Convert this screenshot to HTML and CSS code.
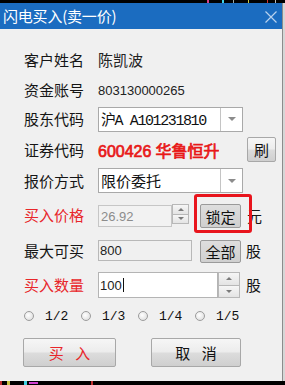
FILE: index.html
```html
<!DOCTYPE html>
<html lang="zh">
<head>
<meta charset="utf-8">
<link rel="stylesheet" href="styles.css">
</head>
<body>
<div class="screen">
  <div class="strip strip-top">
    <i class="bit b-red"></i><i class="bit b-cyan"></i><i class="bit b-white"></i><i class="bit b-yellow"></i><i class="bit b-red2"></i><i class="bit b-white2"></i>
  </div>
  <div class="mid">
    <div class="dlg">
      <div class="titlebar">
        <span class="title">闪电买入(卖一价)</span>
        <svg class="close" width="12" height="12" viewBox="0 0 12 12"><path d="M0.5 0.5 L11.5 11.5 M11.5 0.5 L0.5 11.5" stroke="#b9d2ee" stroke-width="1.2" fill="none"/></svg>
      </div>
      <div class="content">
        <div class="row h30"><span class="lbl">客户姓名</span><span class="val">陈凯波</span></div>
        <div class="row h30"><span class="lbl">资金账号</span><span class="num">803130000265</span></div>
        <div class="row h28"><span class="lbl">股东代码</span>
          <div class="select"><span class="sel-text mono">沪A A101231810</span><span class="drop"><i class="tri-down"></i></span></div>
        </div>
        <div class="row h33"><span class="lbl">证券代码</span><span class="stock"><span class="stock-code">600426</span><span class="stock-name">华鲁恒升</span></span><button class="btn btn-shua">刷</button></div>
        <div class="row h29"><span class="lbl">报价方式</span>
          <div class="select"><span class="sel-text">限价委托</span><span class="drop"><i class="tri-down"></i></span></div>
        </div>
        <div class="row h40"><span class="lbl red">买入价格</span>
          <div class="input input-price disabled"><span class="num grey">26.92</span></div>
          <div class="spin spin-price"><span class="sp-up"><i class="tri-up"></i></span><span class="sp-down"><i class="tri-dn"></i></span></div>
          <span class="mark"><button class="btn btn-flat">锁定</button></span>
          <span class="unit unit-yuan">元</span>
        </div>
        <div class="row h32"><span class="lbl">最大可买</span>
          <div class="input input-max"><span class="num">800</span></div>
          <button class="btn btn-flat btn-all">全部</button>
          <span class="unit">股</span>
        </div>
        <div class="row h36"><span class="lbl red">买入数量</span>
          <div class="input input-qty"><span class="num">100</span><i class="caret"></i></div>
          <div class="spin spin-qty"><span class="sp-up"><i class="tri-up"></i></span><span class="sp-down"><i class="tri-dn"></i></span></div>
          <span class="unit">股</span>
        </div>
        <div class="radios">
          <label class="radio"><i class="dot"></i><span class="mono small">1/2</span></label>
          <label class="radio"><i class="dot"></i><span class="mono small">1/3</span></label>
          <label class="radio"><i class="dot"></i><span class="mono small">1/4</span></label>
          <label class="radio"><i class="dot"></i><span class="mono small">1/5</span></label>
        </div>
        <div class="actions">
          <button class="btn btn-big btn-buy">买 入</button>
          <button class="btn btn-big btn-cancel">取 消</button>
        </div>
      </div>
    </div>
    <div class="edge"></div>
  </div>
  <div class="strip strip-bottom">
    <i class="bb bb-red"></i><i class="bb bb-yellow"></i><i class="bb bb-cyan"></i><i class="bb bb-mag"></i><i class="bb bb-red2"></i>
  </div>
</div>
</body>
</html>
```
FILE: styles.css
```css
* { box-sizing: border-box; }
html, body { margin: 0; padding: 0; }
body {
  width: 285px;
  height: 385px;
  overflow: hidden;
  background: #000;
  font-family: "Noto Sans CJK SC", "Liberation Sans", sans-serif;
  color: #111;
}
.screen { display: flex; flex-direction: column; width: 285px; height: 385px; }

.strip { background: #000; display: flex; flex: none; }
.strip-top { height: 3px; }
.bit { display: block; width: 1px; height: 3px; }
.b-red { margin-left: 207px; background: #d2408a; width: 2px; }
.b-cyan { margin-left: 13px; background: #3fd2e6; width: 2px; }
.b-white { margin-left: 9px; background: #9aa; }
.b-yellow { margin-left: 14px; background: #c8c840; }
.b-red2 { margin-left: 18px; background: #d03030; }
.b-white2 { margin-left: 7px; background: #bbb; }

.strip-bottom { height: 4px; }
.bb { display: block; height: 4px; }
.bb-red { width: 2px; background: #c03030; }
.bb-yellow { width: 3px; margin-left: 5px; background: #c8c040; }
.bb-cyan { width: 3px; margin-left: 14px; background: #40d0e0; }
.bb-mag { width: 9px; margin-left: 2px; height: 2px; margin-top: 1px; background: #d040d0; }
.bb-red2 { width: 2px; margin-left: 53px; background: #c03030; }

.mid { display: flex; flex: none; height: 378px; }
.dlg {
  width: 283px;
  border-right: 1px solid #8c8c8c;
  background: #f0f0f0;
  display: flex;
  flex-direction: column;
}
.edge { width: 2px; background: #d6d6d6; }

.titlebar {
  height: 26px;
  flex: none;
  background: #1b6cc0;
  display: flex;
  align-items: center;
  padding-left: 3px;
  padding-right: 4px;
}
.title { color: #fff; font-size: 15px; line-height: 26px; flex: 1; letter-spacing: -0.2px; }
.close { margin-top: 2px; margin-right: 1px; }

.content { padding: 16px 0 0 24px; display: flex; flex-direction: column; }
.row { display: flex; align-items: center; }
.h30 { height: 30px; }
.h28 { height: 28px; }
.h33 { height: 33px; }
.h29 { height: 29px; }
.h40 { height: 40px; }
.h32 { height: 32px; }
.h36 { height: 36px; }

.lbl { width: 74px; font-size: 15px; line-height: 20px; color: #151515; flex: none; }
.lbl.red { color: #e8262a; }
.val { font-size: 15px; line-height: 20px; color: #222; }
.num { font-family: "Liberation Sans", sans-serif; font-size: 13px; color: #222; }
.num.grey { color: #8c8c8c; }
.mono { font-family: "Liberation Mono", "Noto Sans CJK SC", monospace; }

.select {
  width: 145px;
  height: 25px;
  background: #fff;
  border: 1px solid #a9a9a9;
  display: flex;
  align-items: center;
}
.sel-text { flex: 1; padding-left: 2px; font-size: 15px; color: #111; white-space: nowrap; }
.sel-text.mono { font-size: 15px; letter-spacing: -1.4px; }
.drop {
  width: 22px;
  height: 100%;
  border-left: 1px solid #c4c4c4;
  display: flex;
  align-items: center;
  justify-content: center;
}
.tri-down {
  width: 0; height: 0;
  border-left: 4px solid transparent;
  border-right: 4px solid transparent;
  border-top: 4px solid #8c8c8c;
}

.stock {
  display: flex;
  align-items: baseline;
  width: 121px;
  overflow: hidden;
  color: #e81818;
  font-weight: normal;
  -webkit-text-stroke: 0.7px #e81818;
  white-space: nowrap;
  flex: none;
}
.stock-code { font-family: "Liberation Sans", sans-serif; font-size: 16px; }
.stock-name { font-family: "Noto Sans CJK SC", sans-serif; font-size: 16px; margin-left: 4px; }

.btn {
  font-family: "Noto Sans CJK SC", sans-serif;
  font-size: 15px;
  color: #111;
  padding: 0;
  border: 1px solid #a8a8a8;
  border-radius: 2px;
  background: linear-gradient(#f6f6f6 0%, #ececec 48%, #dcdcdc 52%, #cfcfcf 100%);
  display: flex;
  align-items: center;
  justify-content: center;
  line-height: 1;
  flex: none;
}
.btn-shua { width: 29px; height: 25px; margin-left: auto; margin-right: 6px; }
.btn-flat {
  width: 41px;
  height: 24px;
  background: linear-gradient(#dedede, #cfcfcf);
  border-color: #9a9a9a;
}

.input {
  height: 22px;
  border: 1px solid #b4b4b4;
  background: #fff;
  display: flex;
  align-items: center;
  padding-left: 1px;
  flex: none;
}
.input.disabled { background: #f2f2f2; border-color: #c6c6c6; }
.input-price { width: 74px; margin-top: 2px; padding-left: 2px; }
.input-max { width: 94px; height: 21px; background: #f0f0f0; border-color: #b8b8b8; margin-top: -2px; }
.input-qty { width: 120px; height: 26px; }
.caret { display: block; width: 1px; height: 14px; background: #111; margin-left: 1px; }

.spin { display: flex; flex-direction: column; flex: none; }
.spin span {
  flex: 1;
  border: 1px solid #b8b8b8;
  background: linear-gradient(#f6f6f6, #e4e4e4);
  display: flex;
  align-items: center;
  justify-content: center;
}
.spin .sp-down { border-top: none; }
.spin-price { width: 17px; height: 20px; margin-top: -2px; }
.spin-qty { width: 22px; height: 26px; }
.tri-up {
  width: 0; height: 0;
  border-left: 3px solid transparent;
  border-right: 3px solid transparent;
  border-bottom: 3px solid #7a7a7a;
}
.tri-dn {
  width: 0; height: 0;
  border-left: 3px solid transparent;
  border-right: 3px solid transparent;
  border-top: 3px solid #7a7a7a;
}

.mark { position: relative; margin-left: 11px; margin-top: 2px; display: block; flex: none; }
.mark::after {
  content: "";
  position: absolute;
  left: -6px;
  top: -10px;
  right: -11px;
  bottom: -5px;
  border: 3px solid #e8141c;
  border-radius: 3px;
}
.unit { font-size: 15px; line-height: 20px; margin-left: 5px; color: #151515; }
.unit-yuan { margin-left: 6px; margin-top: 2px; }
.btn-all { margin-left: 8px; height: 23px; }
.spin-qty + .unit { margin-left: 6px; }

.radios { display: flex; align-items: center; height: 26px; }
.radio { display: flex; align-items: center; width: 57px; flex: none; }
.dot {
  display: block;
  flex: none;
  width: 10px;
  height: 10px;
  border-radius: 50%;
  border: 1px solid #9c9c9c;
  background: radial-gradient(circle at 40% 40%, #ffffff 0%, #e2e2e2 75%);
  margin-left: 0;
  margin-right: 11px;
}
.small { font-size: 13px; color: #111; }

.actions { display: flex; margin-top: 9px; }
.btn-big { height: 29px; font-size: 15px; letter-spacing: 4px; text-indent: 4px; }
.btn-buy { width: 93px; margin-left: -1px; color: #e8262a; }
.btn-cancel { width: 90px; margin-left: 35px; }
```
